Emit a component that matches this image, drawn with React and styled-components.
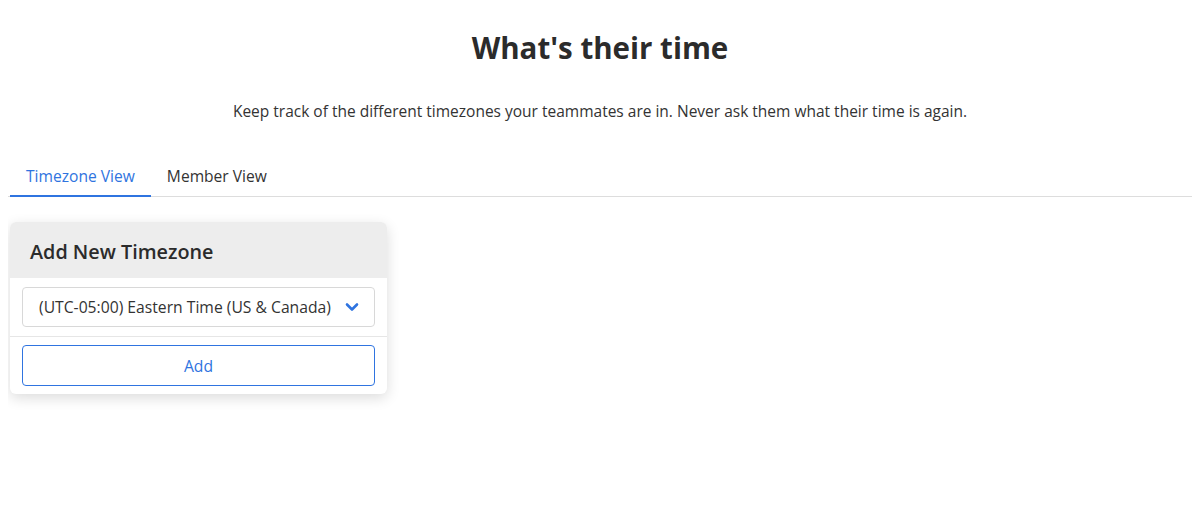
import React, { useState } from "react";
import styled, { createGlobalStyle } from "styled-components";

const GlobalStyle = createGlobalStyle`
  body {
    margin: 8px;
    font-family: "Open Sans", "Noto Sans", sans-serif;
    color: #333;
    background: #fff;
  }
`;

const Page = styled.div`
  padding-bottom: 40px;
`;

const Title = styled.h1`
  text-align: center;
  font-size: 29.5px;
  font-weight: 700;
  margin: 22px 0 0;
  line-height: 36px;
  color: #2b2b2b;
`;

const Subtitle = styled.p`
  text-align: center;
  font-size: 15.5px;
  margin: 34px 0 0;
  line-height: 22px;
  color: #333;
`;

const Tabs = styled.div`
  display: flex;
  margin-top: 35px;
  border-bottom: 1px solid #ddd;
  padding-left: 2px;
`;

const Tab = styled.button`
  border: none;
  background: none;
  font-family: inherit;
  font-size: 15.6px;
  padding: 8px 16px 8px;
  margin-bottom: -1px;
  cursor: pointer;
  color: ${(p) => (p.$active ? "#2f74e0" : "#333")};
  border-bottom: 2px solid ${(p) => (p.$active ? "#2f74e0" : "transparent")};
`;

const Card = styled.div`
  width: 377px;
  margin: 25px 0 0 2px;
  border-radius: 6px;
  background: #fff;
  box-shadow: 0 4px 14px rgba(0, 0, 0, 0.14);
  overflow: hidden;
`;

const CardHeader = styled.div`
  background: #ededed;
  padding: 16px 20px 13px;
  font-size: 19.8px;
  font-weight: 600;
  line-height: 27px;
  color: #2b2b2b;
`;

const Row = styled.div`
  padding: 9px 12px;
  & + & {
    border-top: 1px solid #e6e6e6;
    padding-top: 8px;
    padding-bottom: 8px;
  }
`;

const Select = styled.div`
  display: flex;
  align-items: center;
  justify-content: space-between;
  height: 38px;
  border: 1px solid #d8d8d8;
  border-radius: 4px;
  padding: 0 15px 0 16px;
  font-size: 15.7px;
  color: #333;
`;

const AddButton = styled.button`
  width: 100%;
  height: 41px;
  border: 1px solid #2f74e0;
  border-radius: 4px;
  background: #fff;
  color: #2f74e0;
  font-family: inherit;
  font-size: 15.7px;
  cursor: pointer;
`;

const Chevron = () => (
  <svg width="14" height="10" viewBox="0 0 14 10">
    <path d="M2 2.5 L7 7.5 L12 2.5" fill="none" stroke="#2f74e0" strokeWidth="2.6" strokeLinecap="round" strokeLinejoin="round" />
  </svg>
);

const App = () => {
  const [tab, setTab] = useState("timezone");
  return (
    <Page>
      <GlobalStyle />
      <Title>What's their time</Title>
      <Subtitle>
        Keep track of the different timezones your teammates are in. Never ask them what their time is again.
      </Subtitle>
      <Tabs>
        <Tab $active={tab === "timezone"} onClick={() => setTab("timezone")}>
          Timezone View
        </Tab>
        <Tab $active={tab === "member"} onClick={() => setTab("member")}>
          Member View
        </Tab>
      </Tabs>
      <Card>
        <CardHeader>Add New Timezone</CardHeader>
        <Row>
          <Select>
            <span>(UTC-05:00) Eastern Time (US &amp; Canada)</span>
            <Chevron />
          </Select>
        </Row>
        <Row>
          <AddButton>Add</AddButton>
        </Row>
      </Card>
    </Page>
  );
};

export default App;
